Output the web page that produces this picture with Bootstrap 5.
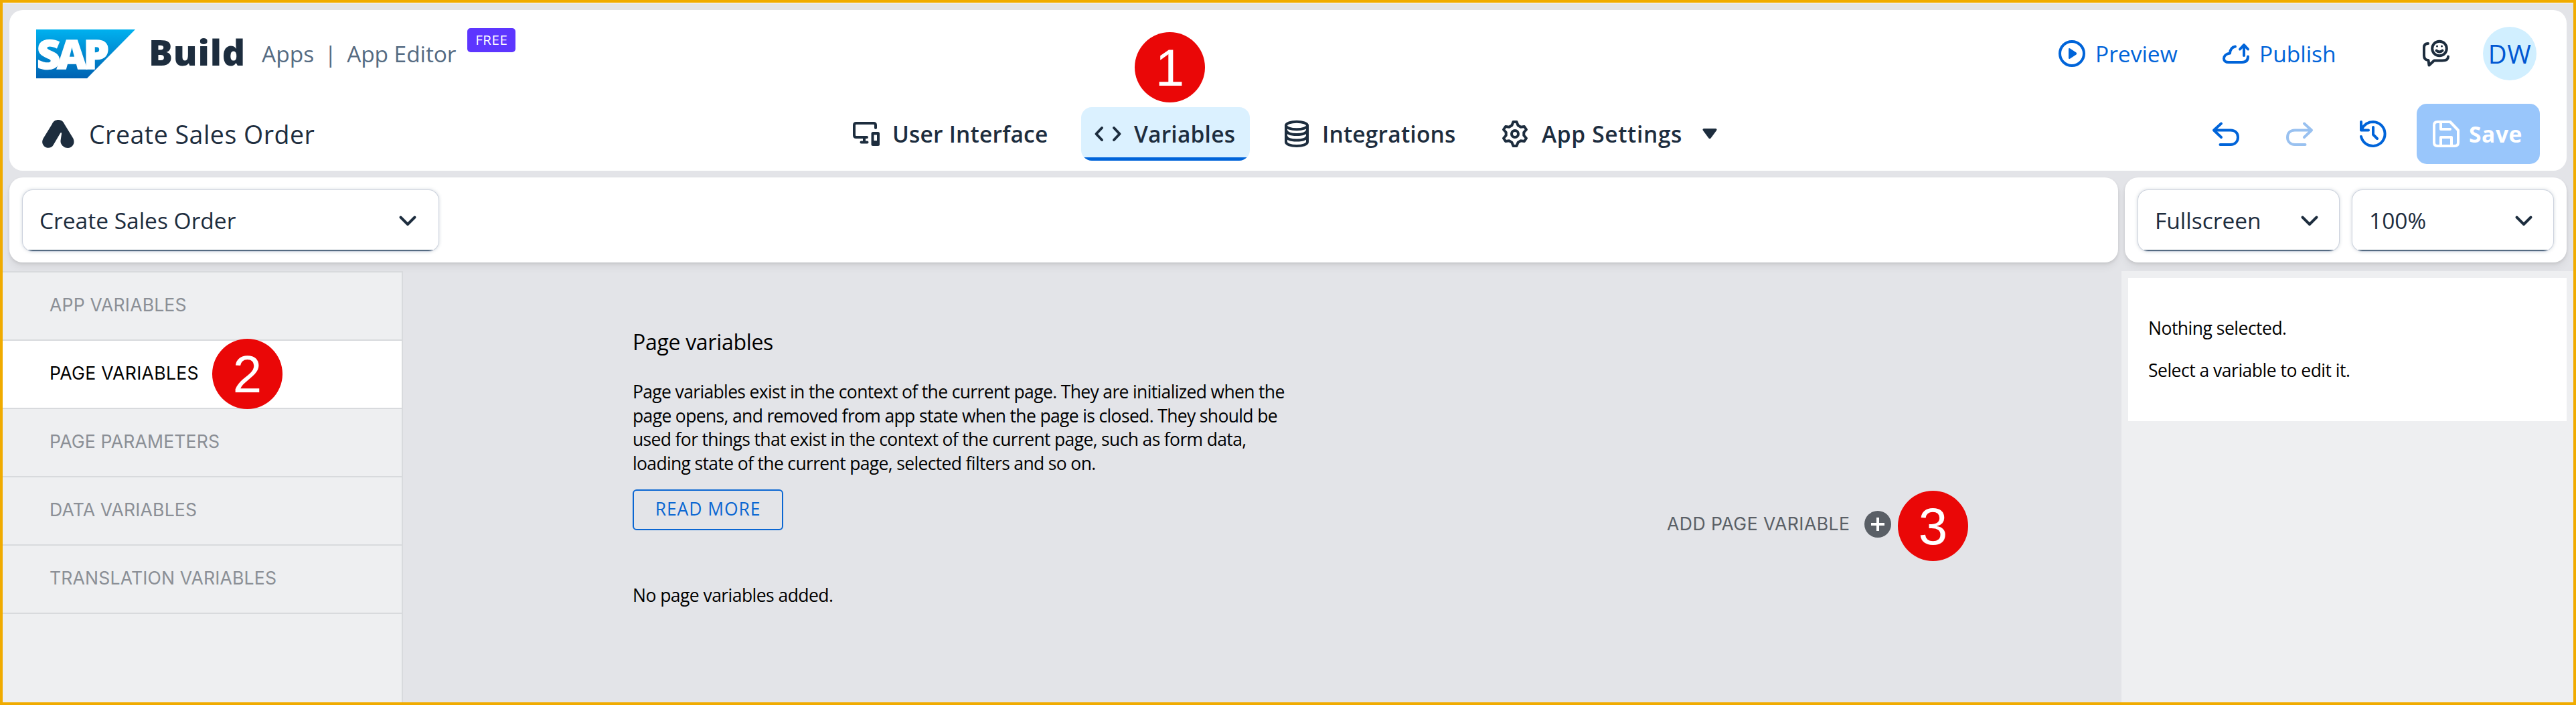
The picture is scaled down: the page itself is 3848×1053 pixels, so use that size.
<!DOCTYPE html>
<html lang="en">
<head>
<meta charset="utf-8">
<meta name="viewport" content="width=device-width, initial-scale=1">
<title>SAP Build Apps | App Editor</title>
<link href="https://cdn.jsdelivr.net/npm/bootstrap@5.3.0/dist/css/bootstrap.min.css" rel="stylesheet">
<style>
  :root { --ink:#1d2d3e; --blue:#0064d9; --slate:#556b82; --canvas:#e3e4e8; --panel:#eeeff1; --rule:#d8dadd; }
  body { font-family:"Open Sans","Noto Sans",sans-serif; color:var(--ink); font-size:33.5px; line-height:1.2; }
  .frame { height:1053px; border:4px solid #f0ab00; background:var(--canvas); box-shadow:inset 0 1px #fff; padding-top:11px; overflow:hidden; }
  .surface { background:#fff; border-radius:20px; }
  .shell { margin:0 10px; height:240px; }
  .shell-top { height:130px; padding:0 45px 0 40px; }
  .shell-nav { height:110px; padding-right:40px; }
  svg { display:block; flex:none; overflow:visible; }
  .ln { fill:none; stroke:currentColor; stroke-width:4; stroke-linecap:round; stroke-linejoin:round; }
  .brand { font-size:53.5px; font-weight:800; margin:-4px 0 0 20px; width:169px; letter-spacing:.8px; }
  .crumb { color:var(--slate); }
  .crumb-sep { width:49px; text-align:center; }
  .crumb-page { letter-spacing:-.1px; }
  .free-tag { background:#5d36ff; color:#fff; width:72px; height:36px; border-radius:5px; font-size:20.5px; letter-spacing:.6px; line-height:34px; text-align:center; margin:-41px 0 0 17px; padding:0; font-weight:400; }
  .link-act { color:var(--blue); gap:15px; }
  .act-preview { width:245px; }
  .act-publish { width:299px; }
  .chat-slot { width:90px; }
  .avatar { width:80px; height:80px; background:#d1efff; color:#0057d2; font-size:38.5px; letter-spacing:.6px; }
  .app-name { width:1240px; padding-left:49px; gap:22px; font-size:37.5px; letter-spacing:.5px; }
  .tabs-bar { gap:30px; }
  .tab-item { height:80px; padding:0 0 0 20px; gap:19px; font-weight:600; border-radius:16px; letter-spacing:.2px; position:relative; white-space:nowrap; color:var(--ink); }
  .tab-item.active { background:linear-gradient(#0064d9,#0064d9) bottom/100% 5px no-repeat #dbf1ff; }
  .t-ui { width:331px; } .t-var { width:252px; } .t-int { width:296px; } .t-set { width:361px; letter-spacing:.65px; gap:20px; }
  .t-int { gap:18px; }
  .caret-ico { margin-left:10px; }
  .callout-dot { position:absolute; width:105px; height:105px; border-radius:50%; background:#ea0707; color:#fff; font:400 78px/107px "Liberation Sans",sans-serif; letter-spacing:0; text-align:center; z-index:2; }
  .dot-1 { left:80px; top:-112px; }
  .dot-2 { left:313px; top:-3px; }
  .dot-3 { left:345px; top:-30px; }
  .tools { gap:70px; color:var(--blue); }
  .save-btn { width:184px; height:90px; border-radius:15px; margin-left:45px; background:#99c6fb; color:#fff; font-size:33.5px; font-weight:700; padding:0 0 0 24px; gap:14px; letter-spacing:.6px; }
  .bar-row { margin:10px 10px 13px; gap:10px; }
  .bar { height:127px; box-shadow:0 2px 4px rgba(0,0,0,.10), 0 8px 12px rgba(0,0,0,.05); padding:19px 20px 0; }
  .bar-right { width:660px; gap:20px; }
  .pick { height:91px; border-radius:15px; padding:0 33px 0 25px; background:linear-gradient(#556b82,#556b82) bottom/100% 2px no-repeat #fff; box-shadow:0 0 0 1px #cdd3de, 0 0 5px 1px rgba(85,107,130,.28); }
  .pick-page { width:621px; }
  .bar-right .pick { padding-right:31px; }
  .work { height:644px; }
  .side { width:598px; background:var(--panel); border-right:2px solid var(--rule); border-top:2px solid var(--rule); }
  .side-item { height:102px; border-bottom:2px solid var(--rule); padding:0 0 3px 70px; color:#8b8f96; font-family:Inter,"Liberation Sans",sans-serif; font-size:26.6px; letter-spacing:.15px; position:relative; }
  .side-item.active { background:#fff; color:#000; letter-spacing:.3px; }
  .stage { color:#000; padding:84px 0 0 343px; font-size:26.5px; }
  .intro { width:1880px; height:314px; }
  .stage h1 { font-size:32px; line-height:44px; margin:0 0 35px; letter-spacing:-.3px; font-weight:400; }
  .blurb { line-height:35.7px; margin:0 0 20px; letter-spacing:-.65px; white-space:nowrap; }
  .more-btn { width:225px; height:61px; border:2px solid #0a66d2; border-radius:6px; color:#0a66d2; font-size:26.5px; letter-spacing:.9px; }
  .add-var { font-family:Inter,"Liberation Sans",sans-serif; font-size:26.6px; letter-spacing:.45px; color:#5a5f66; width:335px; height:40px; position:relative; white-space:nowrap; }
  .empty-note { margin:68px 0 0; line-height:36px; letter-spacing:-.55px; }
  .inspect { width:675px; background:var(--panel); padding:10px 10px 0; color:#000; font-size:26.5px; letter-spacing:-.5px; }
  .inspect-card { background:#fff; height:214px; padding:57px 0 0 30px; }
  .inspect-card p { margin:0 0 27px; line-height:36px; }
</style>
</head>
<body>
<div class="frame">
  <header class="surface shell">
    <div class="shell-top d-flex align-items-center justify-content-between">
      <div class="d-flex align-items-center">
        <svg width="148" height="73" viewBox="0 0 148 73">
          <defs><linearGradient id="sapg" x1="0" y1="0" x2="0" y2="1"><stop offset="0" stop-color="#00b1ef"/><stop offset="1" stop-color="#0062b2"/></linearGradient></defs>
          <path d="M0 0H148L76 73H0Z" fill="url(#sapg)"/>
          <text x="1" y="58.5" fill="#fff" stroke="#fff" stroke-width="1.5" font-family="Open Sans" font-weight="800" font-size="61" textLength="108" lengthAdjust="spacing">SAP</text>
        </svg>
        <span class="brand">Build</span>
        <span class="crumb">Apps</span>
        <span class="crumb crumb-sep">|</span>
        <span class="crumb crumb-page">App Editor</span>
        <span class="badge free-tag">FREE</span>
      </div>
      <div class="d-flex align-items-center">
        <a class="link-act act-preview d-flex align-items-center text-decoration-none">
          <svg width="40" height="40" viewBox="0 0 40 40"><circle class="ln" cx="20" cy="20" r="18"/><path d="M15 13.5Q15 11.5 17 12.3L26.5 18.5Q28 20 26.5 21.5L17 27.7Q15 28.5 15 26.5Z" fill="currentColor"/></svg>
          Preview</a>
        <a class="link-act act-publish d-flex align-items-center text-decoration-none">
          <svg width="40" height="40" viewBox="0 0 40 40"><path class="ln" d="M19 9.500C13.500 10.500 11.500 14 11 19.500C5 20.500 2 24 2 27.500C2 31 5 33 9 33H29C35 33 38 30 38 24.500M32 23V8M26 13.500L32 7L38 13.500"/></svg>
          Publish</a>
        <span class="chat-slot">
          <svg width="40" height="40" viewBox="0 0 40 40"><path class="ln" d="M8 5C4 5 2 7 2 11V23C2 27 4 30 8.500 30L9.500 37.500L17 30.500H29C35 30.500 38 29 38 24.500"/><circle class="ln" cx="25" cy="12.500" r="10.800"/><path class="ln" stroke-width="3" d="M20.500 15.500Q25 19.500 29.500 15.500"/><circle cx="21.500" cy="9" r="1.500" fill="currentColor"/><circle cx="28.500" cy="9" r="1.500" fill="currentColor"/></svg>
        </span>
        <span class="avatar rounded-circle d-flex align-items-center justify-content-center">DW</span>
      </div>
    </div>
    <div class="shell-nav d-flex align-items-center">
      <div class="app-name d-flex align-items-center">
        <svg width="48" height="42" viewBox="0 0 48 42"><path d="M15 6C18-2 30-2 33 6L46.500 28C50 36 44 42 38.500 42C32 42 27 37 27.500 31L29 21C29 18.500 28 18.500 27 20L17 37C14 43 7 43 3 39.500C-1 35 0 31 1.500 28Z" fill="#1d2d3e"/></svg>
        Create Sales Order</div>
      <nav class="tabs-bar d-flex">
        <a class="tab-item t-ui d-flex align-items-center text-decoration-none">
          <svg width="40" height="40" viewBox="0 0 40 40"><path class="ln" d="M34 11V7Q34 4 31 4H5Q2 4 2 7V22Q2 25 5 25H21M17 26V32M12.500 32.500H21.500"/><rect x="27.500" y="17" width="12.500" height="21" rx="2.500" fill="currentColor"/><rect x="31.500" y="21.500" width="4.500" height="8.500" fill="#fff"/></svg>
          User Interface</a>
        <a class="tab-item t-var active d-flex align-items-center text-decoration-none">
          <svg width="40" height="40" viewBox="0 0 40 40"><path class="ln" d="M11 11L2.500 20L11 29M29 11L37.500 20L29 29"/></svg>
          Variables
          <span class="callout-dot dot-1">1</span></a>
        <a class="tab-item t-int d-flex align-items-center text-decoration-none">
          <svg width="40" height="40" viewBox="0 0 40 40"><ellipse class="ln" cx="20" cy="7.500" rx="16" ry="5.700"/><path class="ln" d="M4 7.500V32C4 35.500 11 38 20 38S36 35.500 36 32V7.500M4 14.500C5 18.500 11 21 20 21S35 18.500 36 14.500M4 23C5 27 11 29.500 20 29.500S35 27 36 23"/></svg>
          Integrations</a>
        <a class="tab-item t-set d-flex align-items-center text-decoration-none">
          <svg width="40" height="40" viewBox="0 0 40 40"><path class="ln" d="M17.500 2H22.500L24.600 7.300L28.700 9.700L34 9L37 13.500L33.300 17.700V22.300L37 26.500L34 31L28.700 30.300L24.600 32.700L22.500 38H17.500L15.400 32.700L11.300 30.300L6 31L3 26.500L6.700 22.300V17.700L3 13.500L6 9L11.300 9.700L15.400 7.300Z"/><circle class="ln" cx="20" cy="20" r="5"/></svg>
          App Settings
          <svg class="caret-ico" width="22" height="16" viewBox="0 0 22 16"><path d="M2 0H20Q22.500 1 21 3L12.500 14.500Q11 16 9.500 14.500L1 3Q-.5 1 2 0Z" fill="currentColor"/></svg></a>
      </nav>
      <div class="tools d-flex ms-auto">
        <svg width="40" height="40" viewBox="0 0 40 40"><path class="ln" d="M13 4.500L2 14.500L13 25M2 14.500H27C34 14.500 38 19 38 25S34 36 27 36H11.500"/></svg>
        <svg width="40" height="40" viewBox="0 0 40 40" opacity=".4"><path class="ln" d="M27 4.500L38 14.500L27 25M38 14.500H13C6 14.500 2 19 2 25S6 36 13 36H28.500"/></svg>
        <svg width="40" height="40" viewBox="0 0 40 40"><path class="ln" d="M2 2V14.500H13M3 13C7 5 13 2 20 2A18 18 0 1 1 2 24M20 10V21L26 27"/></svg>
      </div>
      <button class="btn save-btn d-flex align-items-center border-0">
        <svg width="40" height="40" viewBox="0 0 40 40"><path class="ln" d="M7 2H26L38 14.500V33Q38 38 33 38H7Q2 38 2 33V7Q2 2 7 2ZM12 3V13H26M12 37V25H28V37"/></svg>
        Save</button>
    </div>
  </header>

  <div class="bar-row d-flex">
    <div class="surface bar flex-grow-1">
      <div class="pick pick-page d-flex align-items-center justify-content-between">Create Sales Order
        <svg width="26" height="16" viewBox="0 0 26 16"><path class="ln" d="M2.500 2.500L13 13L23.500 2.500"/></svg></div>
    </div>
    <div class="surface bar bar-right d-flex">
      <div class="pick flex-fill w-50 d-flex align-items-center justify-content-between">Fullscreen
        <svg width="26" height="16" viewBox="0 0 26 16"><path class="ln" d="M2.500 2.500L13 13L23.500 2.500"/></svg></div>
      <div class="pick flex-fill w-50 d-flex align-items-center justify-content-between">100%
        <svg width="26" height="16" viewBox="0 0 26 16"><path class="ln" d="M2.500 2.500L13 13L23.500 2.500"/></svg></div>
    </div>
  </div>

  <div class="work d-flex">
    <aside class="side">
      <div class="side-item d-flex align-items-center">APP VARIABLES</div>
      <div class="side-item active d-flex align-items-center">PAGE VARIABLES<span class="callout-dot dot-2">2</span></div>
      <div class="side-item d-flex align-items-center">PAGE PARAMETERS</div>
      <div class="side-item d-flex align-items-center">DATA VARIABLES</div>
      <div class="side-item d-flex align-items-center">TRANSLATION VARIABLES</div>
    </aside>
    <main class="stage flex-grow-1">
      <div class="intro d-flex justify-content-between align-items-end">
        <div class="align-self-start">
          <h1>Page variables</h1>
          <p class="blurb">Page variables exist in the context of the current page. They are initialized when the<br>page opens, and removed from app state when the page is closed. They should be<br>used for things that exist in the context of the current page, such as form data,<br>loading state of the current page, selected filters and so on.</p>
          <button class="btn more-btn p-0">READ MORE</button>
        </div>
        <div class="add-var d-flex align-items-center justify-content-between">ADD PAGE VARIABLE
          <svg width="40" height="40" viewBox="0 0 40 40"><circle cx="20" cy="20" r="20" fill="#5a5f66"/><path d="M18 10H22V18H30V22H22V30H18V22H10V18H18Z" fill="#fff"/></svg>
          <span class="callout-dot dot-3">3</span></div>
      </div>
      <p class="empty-note">No page variables added.</p>
    </main>
    <aside class="inspect">
      <div class="inspect-card">
        <p>Nothing selected.</p>
        <p>Select a variable to edit it.</p>
      </div>
    </aside>
  </div>
</div>
<script src="https://cdn.jsdelivr.net/npm/bootstrap@5.3.0/dist/js/bootstrap.bundle.min.js"></script>
</body>
</html>
